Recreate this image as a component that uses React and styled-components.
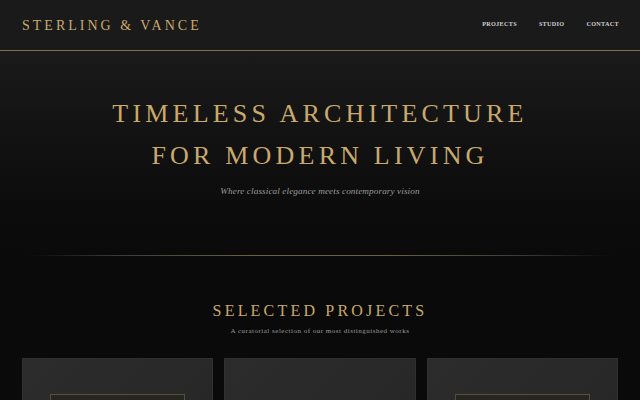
import React from "react";
import styled, { createGlobalStyle } from "styled-components";

const GlobalStyle = createGlobalStyle`
  * {
    box-sizing: border-box;
  }

  body {
    margin: 0;
    background: #0a0a0a;
    font-family: "Liberation Serif", "Times New Roman", serif;
    color: #c9a96e;
  }
`;

const projects = [
  { id: 1, frame: true },
  { id: 2, frame: false },
  { id: 3, frame: true },
];

function App() {
  return (
    <>
      <GlobalStyle />
      <Page>
        <Header>
          <Logo>STERLING &amp; VANCE</Logo>
          <Nav>
            <NavLink href="#">PROJECTS</NavLink>
            <NavLink href="#">STUDIO</NavLink>
            <NavLink href="#">CONTACT</NavLink>
          </Nav>
        </Header>

        <Hero>
          <HeroTitle>
            TIMELESS ARCHITECTURE
            <br />
            FOR MODERN LIVING
          </HeroTitle>
          <HeroTagline>Where classical elegance meets contemporary vision</HeroTagline>
        </Hero>

        <Divider />

        <Projects>
          <SectionTitle>SELECTED PROJECTS</SectionTitle>
          <SectionSub>A curatorial selection of our most distinguished works</SectionSub>
          <Grid>
            {projects.map((p) => (
              <Card key={p.id}>{p.frame && <Frame />}</Card>
            ))}
          </Grid>
        </Projects>
      </Page>
    </>
  );
}

export default App;

const Page = styled.div`
  min-height: 400px;
  overflow: hidden;
  background: #0a0a0a;
`;

const Header = styled.header`
  height: 51px;
  display: flex;
  align-items: center;
  justify-content: space-between;
  padding: 2px 21px 0 22px;
  background: #1a1a1a;
  border-bottom: 1px solid rgba(201, 169, 110, 0.6);
`;

const Logo = styled.div`
  font-size: 14px;
  letter-spacing: 3px;
  color: #c9a96e;
`;

const Nav = styled.nav`
  display: flex;
  gap: 22px;
  padding-bottom: 5px;
`;

const NavLink = styled.a`
  font-size: 6.2px;
  font-weight: 700;
  letter-spacing: 0.3px;
  color: #d0d0d0;
  text-decoration: none;
`;

const Hero = styled.section`
  padding: 42px 20px 56px;
  text-align: center;
  background: linear-gradient(180deg, #1a1a1a 0%, #0d0d0d 70%, #0a0a0a 100%);
`;

const HeroTitle = styled.h1`
  margin: 0;
  font-size: 26px;
  font-weight: 400;
  line-height: 1.6;
  letter-spacing: 4.2px;
  color: #c9a96e;
`;

const HeroTagline = styled.p`
  margin: 8px 0 0;
  font-size: 9.2px;
  font-style: italic;
  line-height: 1.6;
  letter-spacing: 0.1px;
  color: #9a9a9a;
`;

const Divider = styled.div`
  height: 1px;
  margin: 0 30px;
  background: linear-gradient(
    90deg,
    transparent 0%,
    #3a3a3a 15%,
    #6b6443 40%,
    #6b6443 60%,
    #3a3a3a 85%,
    transparent 100%
  );
`;

const Projects = styled.section`
  padding: 42px 22px 0;
  text-align: center;
`;

const SectionTitle = styled.h2`
  margin: 0;
  font-size: 16px;
  font-weight: 400;
  line-height: 1.6;
  letter-spacing: 3.2px;
  color: #c9a96e;
`;

const SectionSub = styled.p`
  margin: 2px 0 0;
  font-size: 7px;
  line-height: 1.6;
  letter-spacing: 0.5px;
  color: #9a9a9a;
`;

const Grid = styled.div`
  display: grid;
  grid-template-columns: repeat(3, 1fr);
  gap: 11px;
  margin-top: 21px;
`;

const Card = styled.div`
  height: 200px;
  padding-top: 35px;
  display: flex;
  justify-content: center;
  background: linear-gradient(135deg, #2c2c2c 0%, #242424 100%);
  border: 1px solid #303030;
`;

const Frame = styled.div`
  width: 135px;
  height: 120px;
  border: 1px solid #545040;
  background: #262520;
`;
